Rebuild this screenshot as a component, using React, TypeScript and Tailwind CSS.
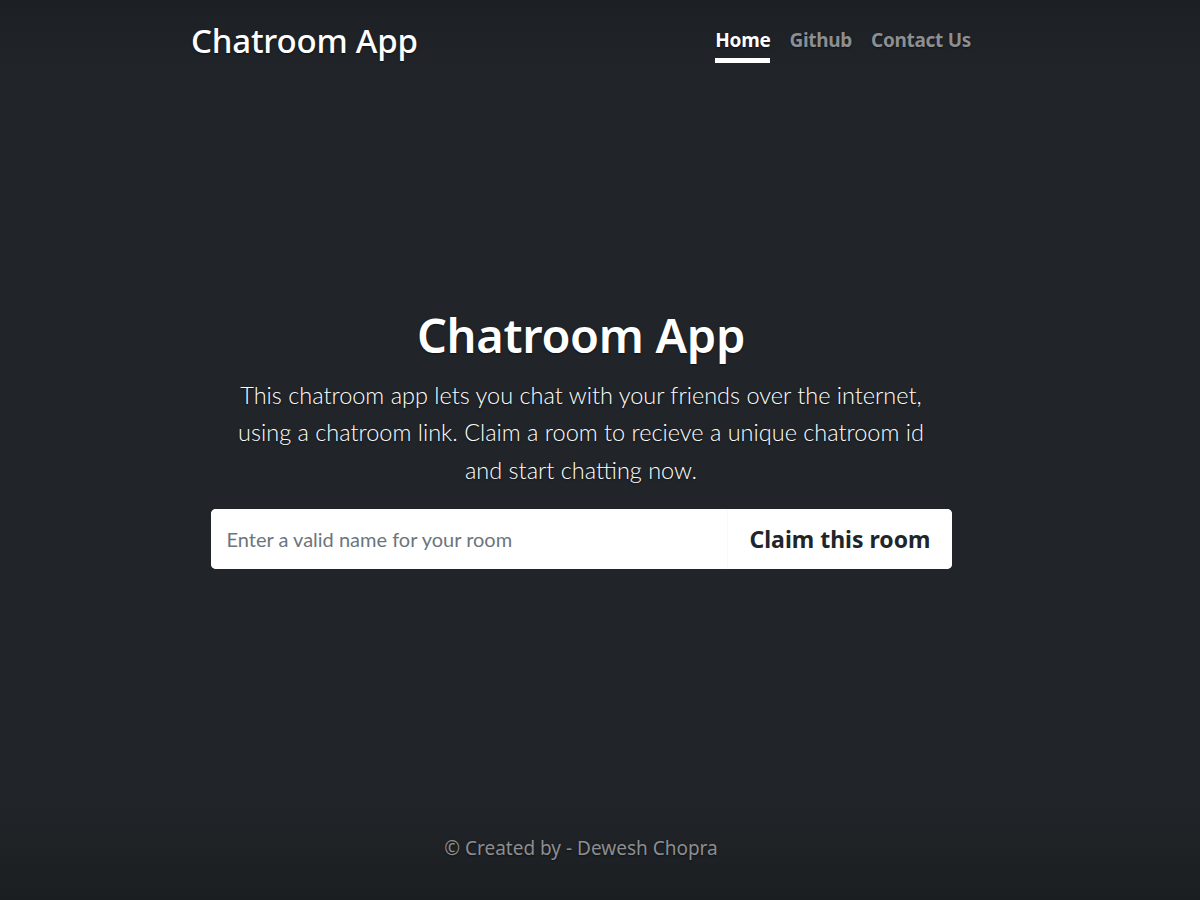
export default function App() {
  const links = [
    { label: 'Home', active: true },
    { label: 'Github', active: false },
    { label: 'Contact Us', active: false },
  ]

  return (
    <div
      className="h-[900px] w-full flex justify-center pr-[38px] text-white bg-[linear-gradient(to_bottom,#1c1f23_0px,#212529_70px,#212529_800px,#1b1e21_900px)] text-shadow-[0_1px_2px_rgba(0,0,0,0.5)]"
      style={{ fontFamily: '"Noto Sans", "Open Sans", sans-serif' }}
    >
      <div className="w-[780px] flex flex-col">
        <header className="flex items-start justify-between pt-[21px]">
          <h3 className="text-[33px] leading-[1.2] font-medium tracking-[-0.2px]">Chatroom App</h3>
          <nav className="flex gap-[19px] pt-[6px]">
            {links.map((l) => (
              <a
                key={l.label}
                href="#"
                className={`text-[19px] leading-[26px] font-bold tracking-[-0.3px] border-b-[5px] pb-[5px] ${
                  l.active ? 'text-white border-white' : 'text-[#8c8e91] border-transparent'
                }`}
              >
                {l.label}
              </a>
            ))}
          </nav>
        </header>

        <main className="flex-1 flex flex-col items-center justify-center pb-[20px]">
          <h1 className="text-[47px] leading-[1.2] font-semibold tracking-[-0.3px] mb-[13px]">Chatroom App</h1>
          <p
            className="w-[741px] text-center text-[23.5px] leading-[37.5px] font-light text-white"
            style={{ fontFamily: 'Lato, "Noto Sans", sans-serif' }}
          >
            This chatroom app lets you chat with your friends over the internet,
            <br />
            using a chatroom link. Claim a room to recieve a unique chatroom id
            <br />
            and start chatting now.
          </p>
          <div className="mt-[20px] w-[741px] h-[60px] flex bg-white rounded-[5px] overflow-hidden text-shadow-none">
            <input
              type="text"
              placeholder="Enter a valid name for your room"
              className="flex-1 px-[16px] text-[20px] text-[#495057] placeholder:text-[#6c757d] outline-none bg-white"
              style={{ fontFamily: 'Lato, "Noto Sans", sans-serif' }}
            />
            <button className="px-[21px] text-[23px] font-bold text-[#212529] bg-white border-l border-[#f8f9fa]">
              Claim this room
            </button>
          </div>
        </main>

        <footer className="pb-[38px] text-center text-[19px] text-[#8c8e91]">
          © Created by - Dewesh Chopra
        </footer>
      </div>
    </div>
  )
}
